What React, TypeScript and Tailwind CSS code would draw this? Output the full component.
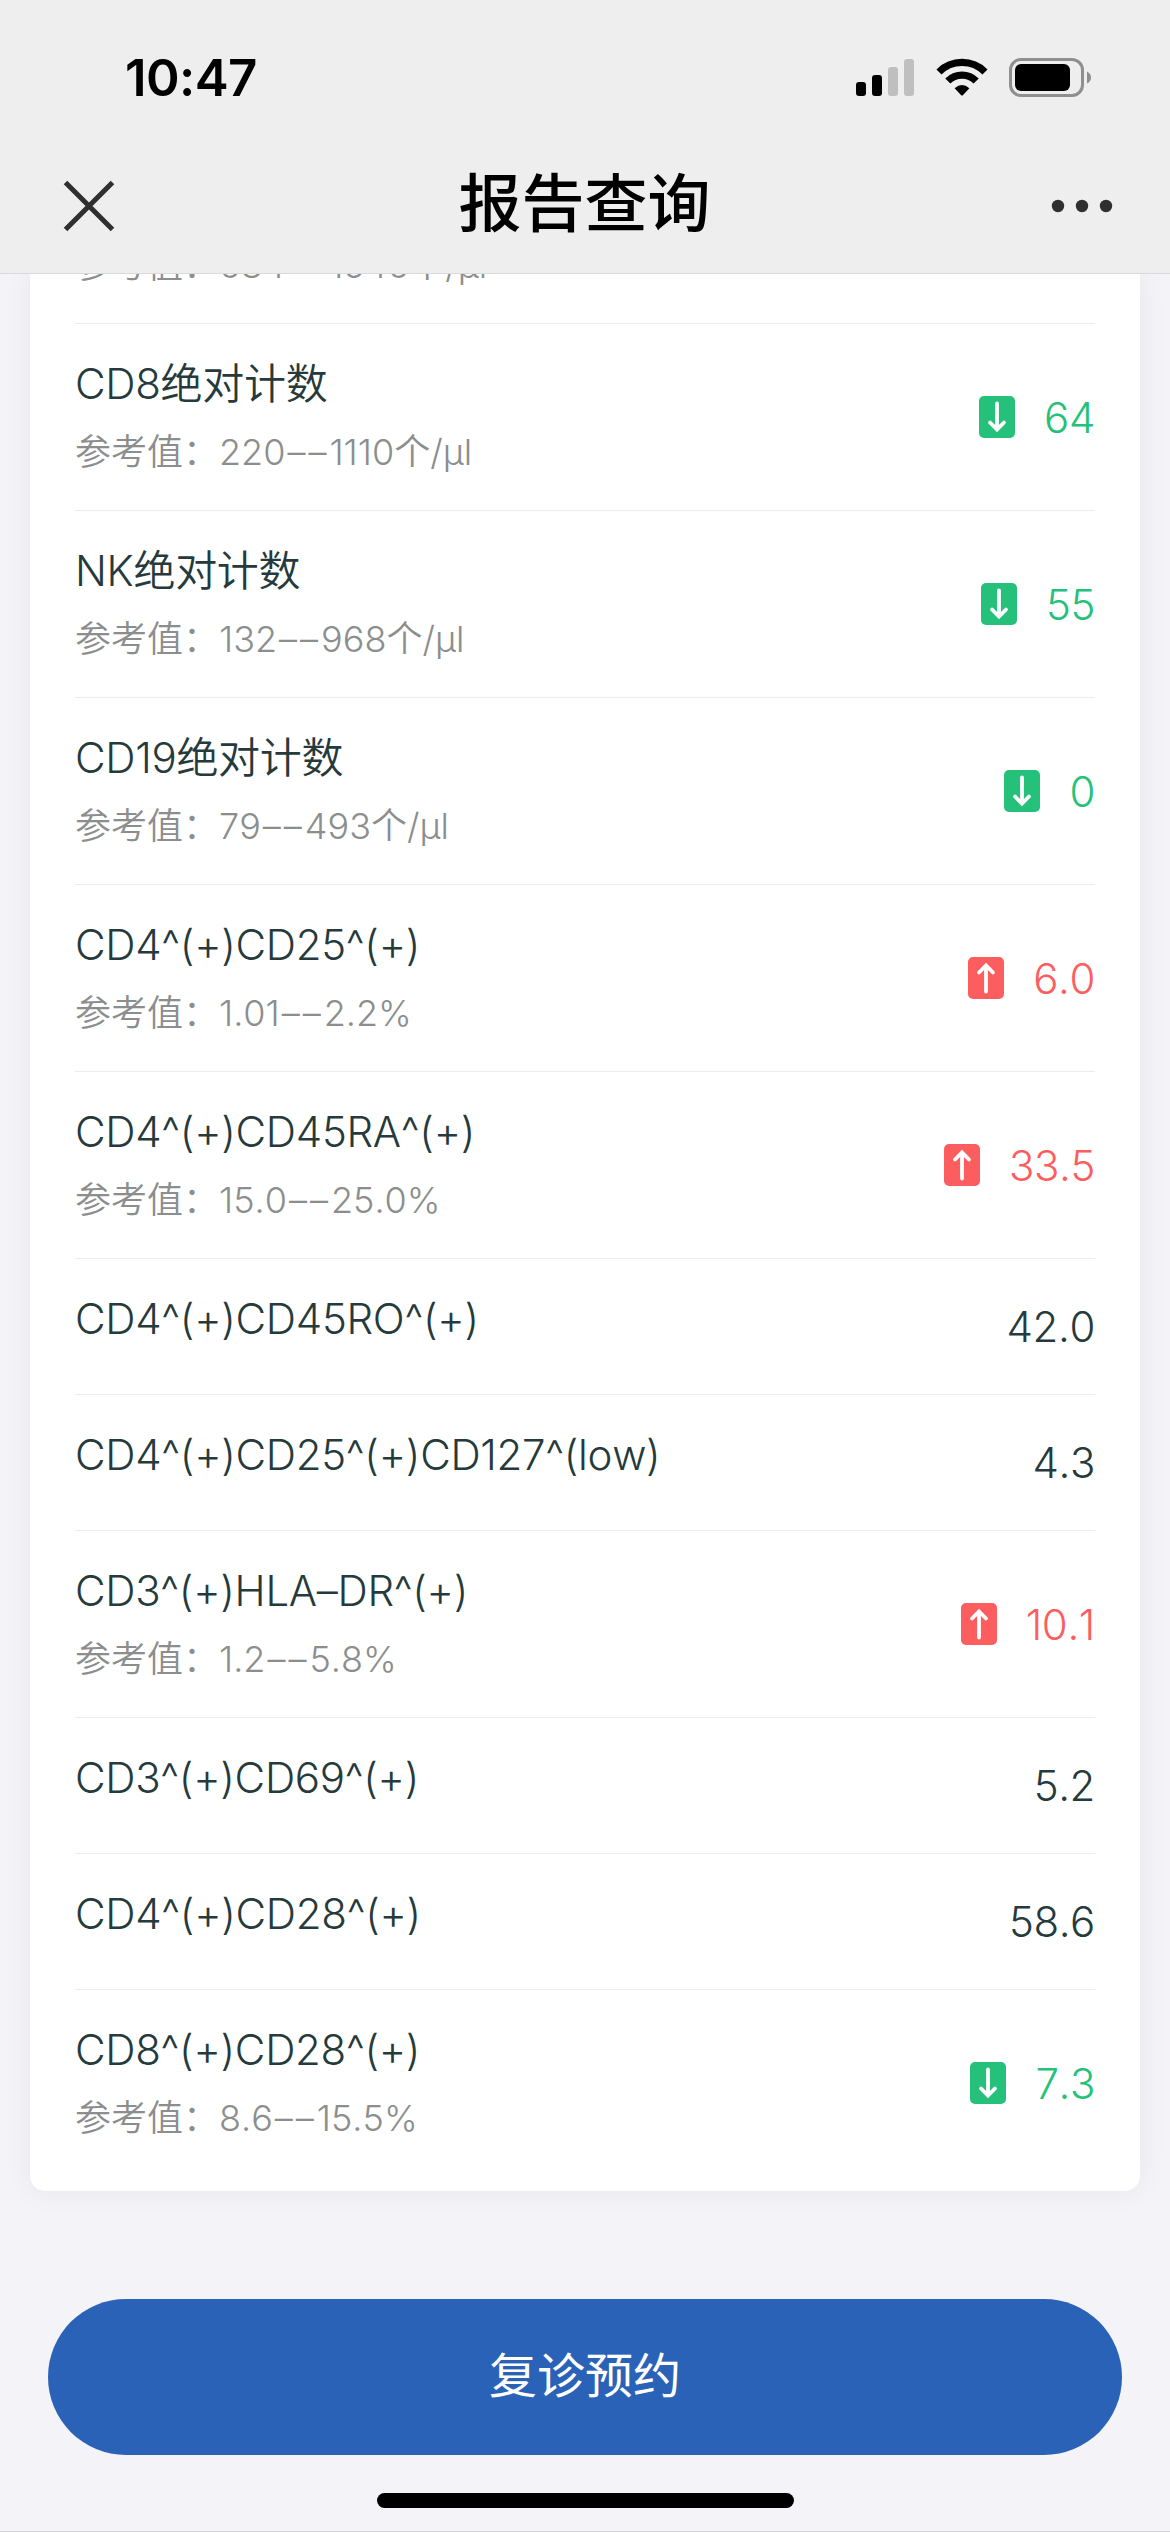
import React from 'react';

type Trend = 'up' | 'down';

interface ReportItem {
    name: string;
    range?: [string, string];
    value: string;
    trend?: Trend;
}

const items: ReportItem[] = [
    { name: 'CD8绝对计数', range: ['220', '1110个/μl'], value: '64', trend: 'down' },
    { name: 'NK绝对计数', range: ['132', '968个/μl'], value: '55', trend: 'down' },
    { name: 'CD19绝对计数', range: ['79', '493个/μl'], value: '0', trend: 'down' },
    { name: 'CD4^(+)CD25^(+)', range: ['1.01', '2.2%'], value: '6.0', trend: 'up' },
    { name: 'CD4^(+)CD45RA^(+)', range: ['15.0', '25.0%'], value: '33.5', trend: 'up' },
    { name: 'CD4^(+)CD45RO^(+)', value: '42.0' },
    { name: 'CD4^(+)CD25^(+)CD127^(low)', value: '4.3' },
    { name: 'CD3^(+)HLA–DR^(+)', range: ['1.2', '5.8%'], value: '10.1', trend: 'up' },
    { name: 'CD3^(+)CD69^(+)', value: '5.2' },
    { name: 'CD4^(+)CD28^(+)', value: '58.6' },
    { name: 'CD8^(+)CD28^(+)', range: ['8.6', '15.5%'], value: '7.3', trend: 'down' },
];

const StatusBar: React.FC = () => (
    <div className="flex h-[155px] items-center justify-between pl-[125px] pr-[78px]">
        <span className="pb-[1px] text-[51px] leading-none font-semibold tracking-[-0.6px] text-black">10:47</span>
        <div className="flex items-center">
            <svg className="h-[39px] w-[59px]" viewBox="0 0 59 39">
                <rect x="0" y="24" width="10" height="14" rx="3" fill="#000" />
                <rect x="16" y="17" width="10" height="21" rx="3" fill="#000" />
                <rect x="32" y="9" width="10" height="29" rx="3" fill="#bfbfbf" />
                <rect x="48" y="1" width="10" height="37" rx="3" fill="#bfbfbf" />
            </svg>
            <svg className="ml-[21px] h-[39px] w-[52px]" viewBox="0 0 52 39">
                <path d="M3 14A32.5 32.5 0 0 1 49 14" fill="none" stroke="#000" strokeWidth="7.2" />
                <path d="M11.8 23A20 20 0 0 1 40.2 23" fill="none" stroke="#000" strokeWidth="7.2" />
                <path d="M18.6 30.2Q26 23.6 33.4 30.2L26.8 37.2Q26 38 25.2 37.2Z" fill="#000" />
            </svg>
            <svg className="ml-[21px] h-[39px] w-[83px]" viewBox="0 0 83 39">
                <rect x="1.5" y="1.5" width="72" height="36" rx="10.5" fill="none" stroke="#8f8f8f" strokeWidth="3" />
                <rect x="6" y="6" width="55" height="27" rx="6" fill="#000" />
                <path d="M78 13.5Q82 15.5 82 19.5T78 25.5Z" fill="#8f8f8f" />
            </svg>
        </div>
    </div>
);

const NavBar: React.FC = () => (
    <div className="flex h-[118px] items-center justify-between pr-[57px] pb-[16px] pl-[63px]">
        <svg className="h-[52px] w-[52px]" viewBox="0 0 52 52">
            <path d="M2.5 2.5L49.5 49.5M49.5 2.5L2.5 49.5" stroke="#2f2f2f" strokeWidth="5" fill="none" />
        </svg>
        <h1 className="pb-[5px] pl-[3px] text-[63px] leading-none font-medium text-black">报告查询</h1>
        <svg className="h-[14px] w-[62px]" viewBox="0 0 62 14">
            <circle cx="7" cy="7" r="6.2" fill="#2f2f2f" />
            <circle cx="31" cy="7" r="6.2" fill="#2f2f2f" />
            <circle cx="55" cy="7" r="6.2" fill="#2f2f2f" />
        </svg>
    </div>
);

const TrendBadge: React.FC<{ trend: Trend }> = ({ trend }) => (
    <svg className="h-[42px] w-[36px]" viewBox="0 0 36 42">
        <rect width="36" height="42" rx="5" fill={trend === 'up' ? '#fc5e5f' : '#25c17b'} />
        <path
            d={trend === 'up' ? 'M18 34.5V9M11 15.5L18 8.5L25 15.5' : 'M18 7.5V33M11 26.5L18 33.5L25 26.5'}
            fill="none"
            stroke="#fff"
            strokeWidth="3.8"
            strokeLinecap="round"
        />
    </svg>
);

const ReferenceRange: React.FC<{ range: [string, string] }> = ({ range: [low, high] }) => (
    <p className="text-[36px] leading-[50px] text-[#8b8e8d]">
        参考值：{low}
        <span className="ml-[2px] tracking-[3px]">––</span>
        {high}
    </p>
);

const ReportRow: React.FC<{ item: ReportItem }> = ({ item }) => {
    const color = item.trend === 'up' ? 'text-[#fc5e5f]' : item.trend === 'down' ? 'text-[#25c17b]' : 'text-[#263a3c]';

    return (
        <li
            className={`flex justify-between border-b border-[#ececec] last:h-[186px] last:border-b-0 ${item.range ? 'h-[187px]' : 'h-[136px]'}`}
        >
            <div className="flex flex-col gap-[13px] pt-[30px]">
                <p className="text-[42px] leading-[60px] tracking-[-0.3px] text-[#263a3c]">{item.name}</p>
                {item.range && <ReferenceRange range={item.range} />}
            </div>
            <div className={`flex items-center gap-[29px] text-[42px] tracking-[-0.4px] ${color}`}>
                {item.trend && <TrendBadge trend={item.trend} />}
                <span>{item.value}</span>
            </div>
        </li>
    );
};

const App: React.FC = () => (
    <div className="flex h-[2532px] w-[1170px] flex-col overflow-hidden bg-[#f3f3f8] font-['Inter','Noto_Sans_CJK_SC',sans-serif]">
        <header className="h-[274px] shrink-0 border-b border-[#dadadb] bg-[#eeeeee]">
            <StatusBar />
            <NavBar />
        </header>

        <main className="shrink-0 overflow-hidden px-[30px] pb-[60px]">
            <ul className="rounded-b-[15px] bg-white px-[45px] pb-[15px] font-[350] shadow-[0_0_30px_rgba(0,0,0,0.06)] [font-kerning:none]">
                {/* Scrolled row, only its lower edge shows below the header */}
                <li className="flex h-[50px] flex-col justify-end overflow-hidden border-b border-[#ececec] pb-[33px]">
                    <ReferenceRange range={['684', '1546个/μl']} />
                </li>
                {items.map((item) => (
                    <ReportRow key={item.name} item={item} />
                ))}
            </ul>
        </main>

        <footer className="flex flex-1 flex-col items-center border-b border-[#d5d5da] px-12 pt-[48px]">
            <button className="h-[156px] w-full rounded-full bg-[#2a62b7] pb-[3px] text-[48px] text-white">复诊预约</button>
            <div className="mt-[38px] h-[15px] w-[417px] rounded-full bg-black" />
        </footer>
    </div>
);

export default App;
